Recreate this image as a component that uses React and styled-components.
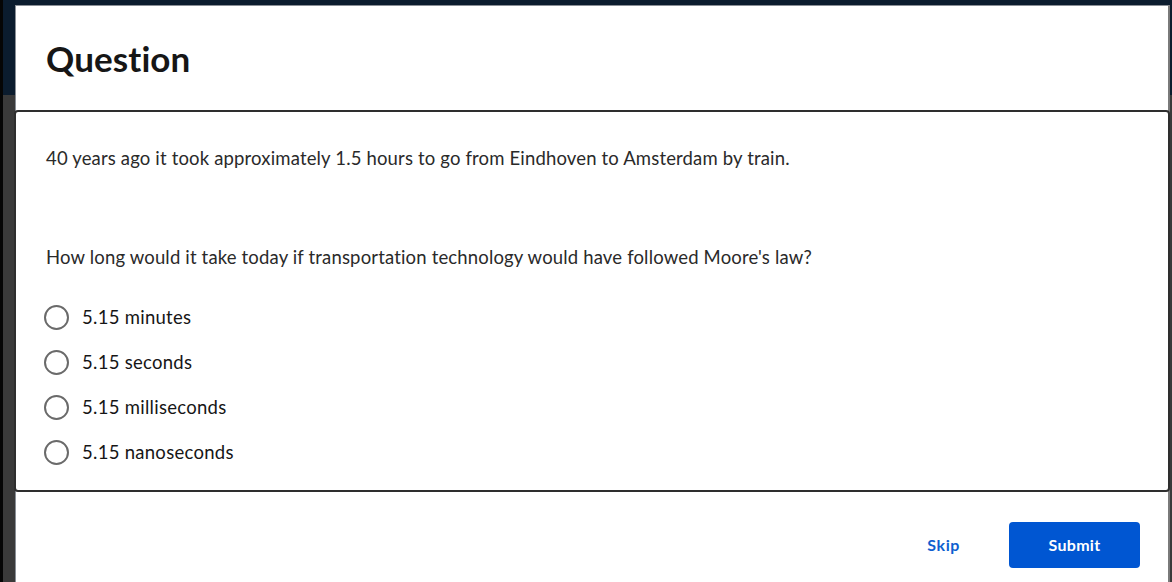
import React from "react";
import styled, { createGlobalStyle } from "styled-components";

const GlobalStyle = createGlobalStyle`
  html, body {
    margin: 0;
    padding: 0;
    height: 100%;
    overflow: hidden;
  }
  body {
    font-family: Lato, "Noto Sans", sans-serif;
    background: #0b1c2e;
  }
`;

// dark page behind the dialog
const Backdrop = styled.div`
  height: 582px;
  box-sizing: border-box;
  display: flex;
  padding: 5px 2px 0 12px;
  border-left: 3px solid #050505;
  background: linear-gradient(to bottom, #0b1c2e 0, #0b1c2e 95px, #3a3a3a 95px);
`;

const Modal = styled.div`
  flex: 1;
  display: flex;
  flex-direction: column;
  background: #fff;
  border-top: 1px solid #8a8f96;
  border-left: 1px solid #8a8f96;
  border-right: 2px solid #7a7a7a;
`;

const Header = styled.div`
  height: 104px;
  box-sizing: border-box;
  display: flex;
  align-items: center;
  padding: 0 0 0 30px;
`;

const Title = styled.h1`
  margin: 0;
  font-size: 35px;
  font-weight: 700;
  color: #161616;
  letter-spacing: 0.1px;
`;

const Body = styled.div`
  margin: 0 -2px 0 -2px;
  border: 2px solid #2e2e2e;
  border-radius: 4px;
  height: 382px;
  box-sizing: border-box;
  padding: 34px 30px 0;
  display: flex;
  flex-direction: column;
`;

const Text = styled.p`
  margin: 0 0 ${(p) => p.gap}px;
  font-size: 18.5px;
  line-height: 24px;
  letter-spacing: 0.16px;
  color: #2a2a2a;
`;

const Options = styled.div`
  display: flex;
  flex-direction: column;
  gap: 19px;
`;

const Option = styled.label`
  display: flex;
  align-items: center;
  gap: 13px;
  font-size: 18.5px;
  line-height: 26px;
  letter-spacing: 0.28px;
  color: #161616;
  cursor: pointer;
`;

const Radio = styled.span`
  width: 25px;
  height: 25px;
  margin-left: -2px;
  box-sizing: border-box;
  border: 2px solid #6a6a6a;
  border-radius: 50%;
  flex-shrink: 0;
`;

const Footer = styled.div`
  flex: 1;
  display: flex;
  align-items: center;
  justify-content: flex-end;
  padding: 15px 28px 0 0;
  gap: 49px;
`;

const SkipButton = styled.button`
  background: none;
  border: none;
  font-family: inherit;
  font-size: 16px;
  font-weight: 700;
  letter-spacing: 0.6px;
  color: #0f5fd0;
  cursor: pointer;
  padding: 0;
`;

const SubmitButton = styled.button`
  width: 131px;
  height: 46px;
  border: none;
  border-radius: 4px;
  background: #0056d2;
  color: #fff;
  font-family: inherit;
  font-size: 16px;
  font-weight: 700;
  letter-spacing: 0.3px;
  cursor: pointer;
`;

const options = ["5.15 minutes", "5.15 seconds", "5.15 milliseconds", "5.15 nanoseconds"];

export default function App() {
  return (
    <>
      <GlobalStyle />
      <Backdrop>
        <Modal>
          <Header>
            <Title>Question</Title>
          </Header>
          <Body>
            <Text gap={75}>
              40 years ago it took approximately 1.5 hours to go from Eindhoven to Amsterdam by train.
            </Text>
            <Text gap={35}>
              How long would it take today if transportation technology would have followed Moore's law?
            </Text>
            <Options>
              {options.map((o) => (
                <Option key={o}>
                  <Radio />
                  {o}
                </Option>
              ))}
            </Options>
          </Body>
          <Footer>
            <SkipButton>Skip</SkipButton>
            <SubmitButton>Submit</SubmitButton>
          </Footer>
        </Modal>
      </Backdrop>
    </>
  );
}
